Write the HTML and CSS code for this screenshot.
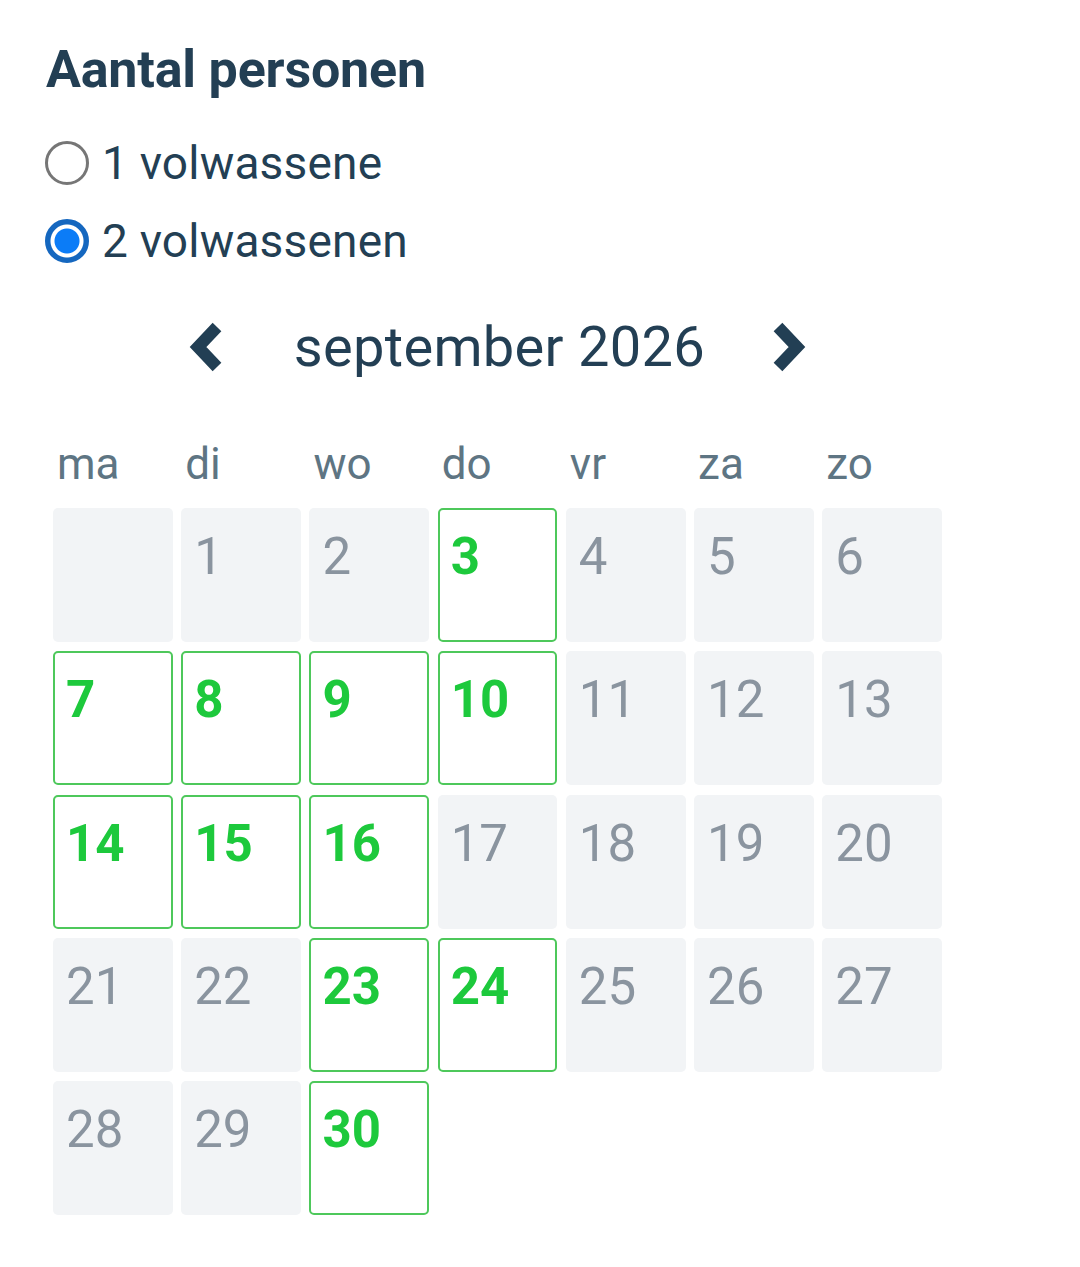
FILE: index.html
```html
<!DOCTYPE html>
<html lang="nl">
<head>
  <meta charset="UTF-8">
  <meta name="viewport" content="width=device-width, initial-scale=1.0">
  <title>Aantal personen</title>
  <link rel="stylesheet" href="styles.css">
</head>
<body>
  <div class="booking">
    <h2 class="title">Aantal personen</h2>

    <div class="persons">
      <label class="option">
        <input type="radio" name="persons" value="1">
        <span>1 volwassene</span>
      </label>
      <label class="option">
        <input type="radio" name="persons" value="2" checked>
        <span>2 volwassenen</span>
      </label>
    </div>

    <div class="calendar">
      <div class="month-nav">
        <button class="nav-btn" title="Vorige maand">
          <svg viewBox="0 0 38 52">
            <polyline points="29,6 10,26 29,46" fill="none" stroke="currentColor" stroke-width="12" stroke-linejoin="miter"/>
          </svg>
        </button>
        <span class="month">september 2026</span>
        <button class="nav-btn" title="Volgende maand">
          <svg viewBox="0 0 38 52">
            <polyline points="9,6 28,26 9,46" fill="none" stroke="currentColor" stroke-width="12" stroke-linejoin="miter"/>
          </svg>
        </button>
      </div>

      <div class="weekdays">
        <span>ma</span><span>di</span><span>wo</span><span>do</span><span>vr</span><span>za</span><span>zo</span>
      </div>

      <div class="days">
        <div class="day"></div>
        <div class="day">1</div>
        <div class="day">2</div>
        <div class="day available">3</div>
        <div class="day">4</div>
        <div class="day">5</div>
        <div class="day">6</div>

        <div class="day available">7</div>
        <div class="day available">8</div>
        <div class="day available">9</div>
        <div class="day available">10</div>
        <div class="day">11</div>
        <div class="day">12</div>
        <div class="day">13</div>

        <div class="day available">14</div>
        <div class="day available">15</div>
        <div class="day available">16</div>
        <div class="day">17</div>
        <div class="day">18</div>
        <div class="day">19</div>
        <div class="day">20</div>

        <div class="day">21</div>
        <div class="day">22</div>
        <div class="day available">23</div>
        <div class="day available">24</div>
        <div class="day">25</div>
        <div class="day">26</div>
        <div class="day">27</div>

        <div class="day">28</div>
        <div class="day">29</div>
        <div class="day available">30</div>
      </div>
    </div>
  </div>
</body>
</html>
```

FILE: styles.css
```css
* {
  margin: 0;
  padding: 0;
  box-sizing: border-box;
}

body {
  font-family: Roboto, 'Noto Sans', sans-serif;
  background: #ffffff;
  color: #233f54;
}

.booking {
  padding: 39px 0 0 46px;
}

.title {
  font-size: 52px;
  font-weight: 700;
  line-height: 62px;
  letter-spacing: -0.2px;
}

.persons {
  margin-top: 23px;
}

.option {
  display: flex;
  align-items: center;
  gap: 13px;
  height: 78px;
  font-size: 46px;
  letter-spacing: 0.2px;
  cursor: pointer;
}

.option input {
  -webkit-appearance: none;
  appearance: none;
  width: 44px;
  height: 44px;
  border-radius: 50%;
  border: 3px solid #767676;
  background: #fff;
  flex-shrink: 0;
  margin-left: -1px;
}

.option input:checked {
  border: 3px solid #1567bf;
  background: radial-gradient(circle, #0b7cf7 0 12px, #fff 13px 16px, #1567bf 17px);
}

/* calendar */

.calendar {
  width: 889px;
  margin-left: 7px;
}

.month-nav {
  display: flex;
  align-items: center;
  justify-content: center;
  height: 80px;
  margin-top: 27px;
}

.nav-btn {
  background: transparent;
  border: none;
  color: #223f54;
  width: 38px;
  height: 52px;
  display: flex;
  cursor: pointer;
}

.nav-btn svg {
  width: 38px;
  height: 52px;
}

.month {
  font-size: 56px;
  margin: 0 64px 0 68px;
  letter-spacing: 0.3px;
}

.weekdays {
  display: grid;
  grid-template-columns: repeat(7, 1fr);
  column-gap: 8.5px;
  margin-top: 53px;
  font-size: 44px;
  line-height: 48px;
  color: #5e7583;
}

.weekdays span {
  padding-left: 4px;
}

.days {
  display: grid;
  grid-template-columns: repeat(7, 1fr);
  grid-auto-rows: 134px;
  column-gap: 8.5px;
  row-gap: 9.3px;
  margin-top: 20px;
}

.day {
  background: #f2f4f6;
  border: 2px solid transparent;
  border-radius: 5px;
  padding: 21px 0 0 11px;
  font-size: 51px;
  line-height: 51px;
  color: #8a949f;
}

.day.available {
  background: #fff;
  border-color: #4ec85b;
  color: #1dc93c;
  font-weight: 700;
}
```
